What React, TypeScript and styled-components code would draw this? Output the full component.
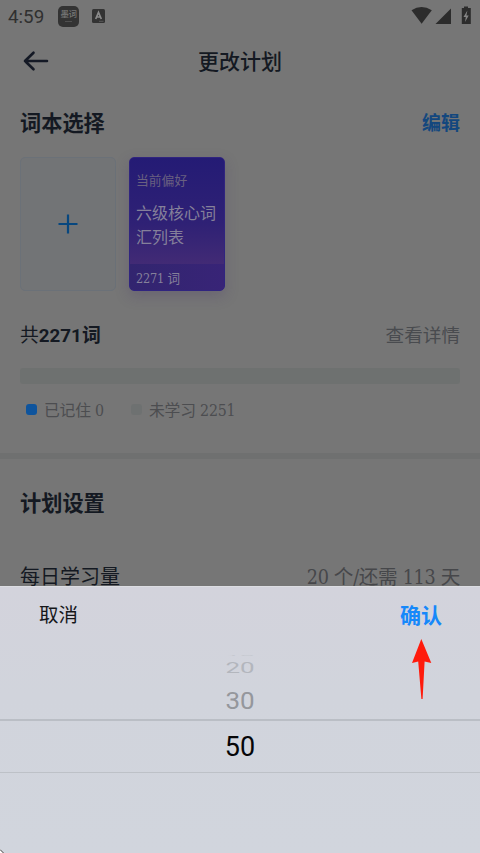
import React from 'react';
import styled, { createGlobalStyle } from 'styled-components';

const Global = createGlobalStyle`
  * { box-sizing: border-box; }
  html, body { margin: 0; padding: 0; background: #767676; }
  body { overflow: hidden; }
`;

const sans = `Roboto, "Noto Sans CJK SC", sans-serif`;
const slab = `"DejaVu Serif Condensed", "DejaVu Serif", "Noto Sans CJK SC", serif`;

const Screen = styled.div`
  position: relative;
  width: 480px;
  height: 853px;
  overflow: hidden;
  display: flex;
  flex-direction: column;
  background: #767676;
  color: #141922;
  font-family: ${sans};
`;

const StatusBar = styled.header`
  height: 32px;
  padding: 0 8px;
  display: flex;
  align-items: center;
  color: #303030;
  font-size: 18.8px;
  line-height: 32px;
`;

const Time = styled.span`
  width: 50px;
  padding-top: 1px;
`;

const AppBadge = styled.span`
  width: 21px;
  height: 21px;
  border-radius: 5px;
  background: #333;
  color: #777;
  display: flex;
  flex-direction: column;
  align-items: center;
  justify-content: center;
  font-size: 8.5px;
  font-weight: 500;
  line-height: 9px;
  letter-spacing: -0.5px;
  white-space: nowrap;
`;

const BadgeMark = styled.i`
  width: 7px;
  height: 1px;
  margin-top: 2px;
  background: #505050;
`;

const StatusIcons = styled.svg`
  margin-left: auto;
  display: block;
`;

const LetterBadge = styled.svg`
  margin-left: 13px;
  display: block;
`;

const NavBar = styled.nav`
  height: 60px;
  padding: 0 20px 3px;
  display: grid;
  grid-template-columns: 60px 1fr 60px;
  align-items: center;
`;

const NavTitle = styled.h1`
  margin: 0;
  text-align: center;
  font-size: 21px;
  font-weight: 500;
  line-height: 30px;
  padding-top: 2px;
`;

const Row = styled.div<{ $h: number; $top?: number; $bottom?: number }>`
  height: ${(p) => p.$h}px;
  padding: ${(p) => p.$top || 0}px 20px ${(p) => p.$bottom || 0}px;
  flex: none;
  display: flex;
  align-items: center;
  justify-content: space-between;
  white-space: nowrap;
`;

const Heading = styled.h2`
  margin: 0;
  font-size: 21.2px;
  font-weight: 700;
  line-height: 30px;
`;

const EditLink = styled.a`
  color: #13477e;
  font-size: 19px;
  font-weight: 700;
  line-height: 28px;
`;

const Cards = styled.div`
  height: 134px;
  flex: none;
  padding: 0 20px;
  display: flex;
  gap: 13px;
`;

const AddCard = styled.div`
  width: 96px;
  border: 1px solid #6b7178;
  border-radius: 5px;
  background: #727476;
  display: flex;
  align-items: center;
  justify-content: center;
`;

const BookCard = styled.div`
  width: 96px;
  border-radius: 5px;
  overflow: hidden;
  display: flex;
  flex-direction: column;
  color: #85809a;
  background: linear-gradient(#241b75, #2f2175 50%, #432b75 82%);
  border: 1px solid #30247f;
  box-shadow: 0 5px 14px rgba(66, 48, 105, 0.25);
`;

const BookTag = styled.div`
  padding: 13px 0 0 6px;
  font-size: 12.8px;
  line-height: 20px;
  color: #696080;
`;

const BookName = styled.div`
  padding: 11px 0 0 6px;
  font-size: 16px;
  line-height: 24px;
`;

const BookCount = styled.div`
  height: 26px;
  margin-top: auto;
  padding: 2px 0 0 6px;
  font-family: ${slab};
  font-size: 12.6px;
  letter-spacing: -0.2px;
  line-height: 26px;
  background: linear-gradient(90deg, #32256f, #382477);
`;

const Total = styled.span`
  font-size: 18.8px;
  b { font-weight: 700; }
`;

const DetailLink = styled.a`
  font-size: 18.6px;
  color: #494b4f;
`;

const Track = styled.div`
  height: 16px;
  flex: none;
  margin: 0 20px;
  border-radius: 3px;
  background: #6e7170;
`;

const Legend = styled.div`
  height: 69px;
  flex: none;
  padding: 0 0 18px 26px;
  display: flex;
  align-items: center;
  font-family: ${slab};
  font-size: 15.8px;
  letter-spacing: -0.2px;
  color: #4c4d50;
  white-space: nowrap;
`;

const Dot = styled.i<{ $c: string }>`
  width: 11px;
  height: 11px;
  margin-right: 7px;
  border-radius: 3px;
  background: ${(p) => p.$c};
`;

const LegendItem = styled.span`
  display: flex;
  align-items: center;
  & + & { margin-left: 27px; }
`;

const Divider = styled.div`
  height: 6px;
  flex: none;
  background: #6f7070;
`;

const SettingName = styled.span`
  font-size: 20px;
`;

const SettingValue = styled.span`
  font-family: ${slab};
  font-size: 19.6px;
  letter-spacing: -0.3px;
  color: #46474a;
`;

const Sheet = styled.section`
  position: absolute;
  left: 0;
  right: 0;
  bottom: 0;
  height: 267px;
  border-top: 1px solid #dcdde2;
  background: linear-gradient(#d3d3dc, #d1d4dc 40%, #d1d5dd);
`;

const SheetBar = styled.div`
  height: 54px;
  padding: 0 38px 2px 39px;
  display: flex;
  align-items: center;
  justify-content: space-between;
`;

const Cancel = styled.span`
  font-size: 19.5px;
  color: #16171a;
`;

const Confirm = styled.span`
  font-size: 21px;
  font-weight: 700;
  color: #1688fa;
  padding-top: 2px;
`;

const Wheel = styled.div`
  display: flex;
  flex-direction: column;
  align-items: center;
  font-size: 26px;
`;

const Option = styled.div<{ $h: number; $c: string; $squash: number; $dy?: number }>`
  height: ${(p) => p.$h}px;
  padding-top: ${(p) => p.$dy || 0}px;
  width: 100%;
  display: flex;
  align-items: center;
  justify-content: center;
  color: ${(p) => p.$c};
  line-height: 1;
  span {
    display: block;
    transform: scaleY(${(p) => p.$squash});
  }
`;

const Selected = styled.div`
  height: 54px;
  width: 100%;
  border-top: 2px solid #babec5;
  border-bottom: 1px solid #bdc1c7;
  display: flex;
  align-items: center;
  justify-content: center;
  color: #060608;
  font-size: 27px;
`;

const Pointer = styled.svg`
  position: absolute;
  left: 411px;
  top: 52px;
`;

const Corner = styled.svg`
  position: absolute;
  left: 0;
  bottom: 0;
`;

export default function App() {
  return (
    <Screen>
      <Global />
      <StatusBar>
        <Time>4:59</Time>
        <AppBadge>
          墨词
          <BadgeMark />
        </AppBadge>
        <LetterBadge width="13" height="14" viewBox="0 0 13 14">
          <rect width="13" height="14" rx="1.5" fill="#333" />
          <path d="M3.700 10 6.500 3.500 9.300 10M4.800 8h3.400" fill="none" stroke="#8a8a8a" strokeWidth="1.7" />
          <path d="M7 12.300h4.500" stroke="#666" strokeWidth="0.8" />
        </LetterBadge>
        <StatusIcons width="62" height="20" viewBox="410 6 62 20">
          <path d="M411.500 10.200 Q421.500 4 431.800 10.200 L421.600 23.800Z" fill="#2c2c2c" />
          <path d="M435.500 24 451 8.500V24Z" fill="#2c2c2c" />
          <path d="M461.800 8h2.200V6.500h4V8h2.800v16h-9z" fill="#2c2c2c" />
          <path d="M467.400 10.500 463.500 17h2.300l-.8 5 3.700-6.500h-2.300z" fill="#858585" />
        </StatusIcons>
      </StatusBar>

      <NavBar>
        <svg width="30" height="24" viewBox="20 48 30 24" fill="none" stroke="#141925" strokeWidth="2.6" strokeLinecap="round" strokeLinejoin="round">
          <path d="M47 60H25M33.500 51.700 25 60l8.500 8.300" />
        </svg>
        <NavTitle>更改计划</NavTitle>
      </NavBar>

      <Row $h={65} $bottom={2}>
        <Heading>词本选择</Heading>
        <EditLink>编辑</EditLink>
      </Row>

      <Cards>
        <AddCard>
          <svg width="20" height="20" viewBox="0 0 20 20" stroke="#07477f" strokeWidth="2.2">
            <path d="M.5 10h19M10 .5v19" />
          </svg>
        </AddCard>
        <BookCard>
          <BookTag>当前偏好</BookTag>
          <BookName>六级核心词<br />汇列表</BookName>
          <BookCount>2271 词</BookCount>
        </BookCard>
      </Cards>

      <Row $h={77} $top={8}>
        <Total>共<b>2271词</b></Total>
        <DetailLink>查看详情</DetailLink>
      </Row>
      <Track />
      <Legend>
        <LegendItem><Dot $c="#0e549d" />已记住 0</LegendItem>
        <LegendItem><Dot $c="#6e7171" />未学习 2251</LegendItem>
      </Legend>
      <Divider />

      <Row $h={90}><Heading>计划设置</Heading></Row>
      <Row $h={54} $bottom={1}>
        <SettingName>每日学习量</SettingName>
        <SettingValue>20 个/还需 113 天</SettingValue>
      </Row>

      <Sheet>
        <SheetBar>
          <Cancel>取消</Cancel>
          <Confirm>确认</Confirm>
        </SheetBar>
        <Wheel>
          <Option $h={18} $c="#c6c9d0" $squash={0.08} $dy={10}><span>10</span></Option>
          <Option $h={18} $c="#b3b6bd" $squash={0.55}><span>20</span></Option>
          <Option $h={42} $c="#95979c" $squash={0.93} $dy={6}><span>30</span></Option>
          <Selected>50</Selected>
        </Wheel>
        <Pointer width="21" height="60" viewBox="0 0 21 60">
          <path d="M10.300 0 20.300 24 13.600 22.500 11.600 60H10.400L7.200 22.500 1 24Z" fill="#ff1b0c" />
        </Pointer>
      </Sheet>

      <Corner width="5" height="5" viewBox="0 0 5 5">
        <path d="M0 1v4h4z" fill="#fff" />
        <path d="M0 1.500 3.500 5" stroke="#333" strokeWidth="1" />
      </Corner>
    </Screen>
  );
}
